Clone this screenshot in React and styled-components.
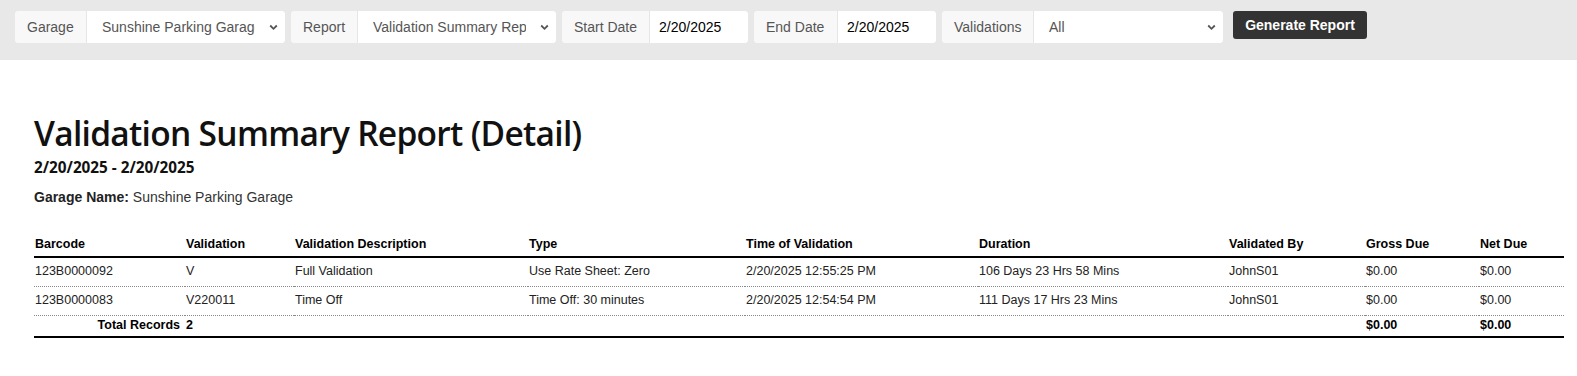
import React from "react";
import styled, { createGlobalStyle } from "styled-components";

const Global = createGlobalStyle`
  html, body { margin: 0; padding: 0; background: #fff; }
  body { font-family: "Liberation Sans", Arial, sans-serif; }
  * { box-sizing: border-box; }
`;

const Toolbar = styled.div`
  height: 60px;
  background: #e8e8e8;
  display: flex;
  align-items: flex-start;
  padding: 11px 0 0 15px;
  gap: 6px;
`;

const Group = styled.div`
  display: flex;
  flex-shrink: 0;
  height: 32px;
  border-radius: 4px;
  overflow: hidden;
  background: #fff;
`;

const Addon = styled.div`
  display: flex;
  align-items: center;
  flex-shrink: 0;
  white-space: nowrap;
  padding: 0 12px;
  background: #f8f8f8;
  border-right: 1px solid #e6e6e6;
  color: #555;
  font-size: 14px;
  width: ${(p) => p.$w}px;
`;

const SelectWrap = styled.div`
  position: relative;
  flex-shrink: 0;
  width: ${(p) => p.$w}px;
  height: 32px;
`;

const Select = styled.select`
  appearance: none;
  -webkit-appearance: none;
  border: none;
  outline: none;
  background: #fff;
  width: 100%;
  height: 100%;
  padding: 0 30px 0 15px;
  font-family: "Liberation Sans", Arial, sans-serif;
  font-size: 14px;
  color: #555;
`;

const Chevron = styled.svg`
  position: absolute;
  right: 7px;
  top: 13px;
  width: 9px;
  height: 7px;
  pointer-events: none;
`;

const DateInput = styled.input`
  border: none;
  outline: none;
  flex-shrink: 0;
  width: ${(p) => p.$w}px;
  height: 32px;
  padding: 0 9px;
  font-family: "Liberation Sans", Arial, sans-serif;
  font-size: 14px;
  color: #000;
  background: #fff;
`;

const Button = styled.button`
  margin-left: 4px;
  flex-shrink: 0;
  height: 28px;
  width: 134px;
  border: none;
  border-radius: 3px;
  background: #333;
  color: #fff;
  font-family: "Liberation Sans", Arial, sans-serif;
  font-weight: bold;
  font-size: 14px;
  padding: 0;
`;

const Content = styled.div`
  padding: 51px 13px 0 34px;
`;

const Title = styled.h1`
  margin: 0;
  font-family: "Open Sans", "Noto Sans", sans-serif;
  font-weight: 600;
  font-size: 33.5px;
  line-height: 44px;
  color: #111;
  letter-spacing: -0.7px;
`;

const Range = styled.div`
  font-family: "Open Sans", "Noto Sans", sans-serif;
  font-weight: 700;
  font-size: 15.3px;
  line-height: 20px;
  color: #111;
  margin-top: 2px;
`;

const Meta = styled.div`
  margin-top: 11px;
  font-size: 14px;
  line-height: 18px;
  color: #333;
  b { color: #222; }
`;

const Table = styled.table`
  margin-top: 23px;
  width: 1530px;
  border-collapse: collapse;
  table-layout: fixed;
  font-size: 12.5px;
  color: #222;
  border-bottom: 2px solid #000;
`;

const Th = styled.th`
  text-align: left;
  font-weight: bold;
  color: #000;
  padding: 4px 1px 5px;
  border-bottom: 2px solid #000;
  height: 28px;
  vertical-align: bottom;
`;

const Td = styled.td`
  padding: 0 1px 2px;
  height: ${(p) => p.$h || 29}px;
  text-align: ${(p) => p.$align || "left"};
  font-weight: ${(p) => (p.$bold ? "bold" : "normal")};
  color: ${(p) => (p.$bold ? "#000" : "#222")};
  padding-right: ${(p) => p.$pr || 1}px;
`;

const Tr = styled.tr`
  border-bottom: ${(p) => (p.$dotted ? "1px dotted #888" : "none")};
`;

const cols = [151, 109, 234, 217, 233, 250, 137, 114, 85];
const headers = [
  "Barcode",
  "Validation",
  "Validation Description",
  "Type",
  "Time of Validation",
  "Duration",
  "Validated By",
  "Gross Due",
  "Net Due",
];
const rows = [
  ["123B0000092", "V", "Full Validation", "Use Rate Sheet: Zero", "2/20/2025 12:55:25 PM", "106 Days 23 Hrs 58 Mins", "JohnS01", "$0.00", "$0.00"],
  ["123B0000083", "V220011", "Time Off", "Time Off: 30 minutes", "2/20/2025 12:54:54 PM", "111 Days 17 Hrs 23 Mins", "JohnS01", "$0.00", "$0.00"],
];

const ChevronIcon = () => (
  <Chevron viewBox="0 0 9 7">
    <path d="M1.2 1.5 L4.5 4.8 L7.8 1.5" fill="none" stroke="#555" strokeWidth="1.8" />
  </Chevron>
);

export default function App() {
  return (
    <>
      <Global />
      <Toolbar>
        <Group>
          <Addon $w={72}>Garage</Addon>
          <SelectWrap $w={198}>
            <Select defaultValue="g">
              <option value="g">Sunshine Parking Garage</option>
            </Select>
            <ChevronIcon />
          </SelectWrap>
        </Group>
        <Group>
          <Addon $w={67}>Report</Addon>
          <SelectWrap $w={198}>
            <Select defaultValue="r">
              <option value="r">Validation Summary Report</option>
            </Select>
            <ChevronIcon />
          </SelectWrap>
        </Group>
        <Group>
          <Addon $w={88}>Start Date</Addon>
          <DateInput $w={98} defaultValue="2/20/2025" />
        </Group>
        <Group>
          <Addon $w={84}>End Date</Addon>
          <DateInput $w={98} defaultValue="2/20/2025" />
        </Group>
        <Group>
          <Addon $w={92}>Validations</Addon>
          <SelectWrap $w={189}>
            <Select defaultValue="a">
              <option value="a">All</option>
            </Select>
            <ChevronIcon />
          </SelectWrap>
        </Group>
        <Button>Generate Report</Button>
      </Toolbar>
      <Content>
        <Title>Validation Summary Report (Detail)</Title>
        <Range>2/20/2025 - 2/20/2025</Range>
        <Meta>
          <b>Garage Name:</b> Sunshine Parking Garage
        </Meta>
        <Table>
          <colgroup>
            {cols.map((w, i) => (
              <col key={i} style={{ width: w }} />
            ))}
          </colgroup>
          <thead>
            <tr>
              {headers.map((h) => (
                <Th key={h}>{h}</Th>
              ))}
            </tr>
          </thead>
          <tbody>
            {rows.map((r) => (
              <Tr key={r[0]} $dotted>
                {r.map((c, i) => (
                  <Td key={i}>{c}</Td>
                ))}
              </Tr>
            ))}
            <Tr>
              <Td $h={22} $bold $align="right" $pr={5}>Total Records</Td>
              <Td $h={22} $bold>2</Td>
              <Td $h={22} />
              <Td $h={22} />
              <Td $h={22} />
              <Td $h={22} />
              <Td $h={22} />
              <Td $h={22} $bold>$0.00</Td>
              <Td $h={22} $bold>$0.00</Td>
            </Tr>
          </tbody>
        </Table>
      </Content>
    </>
  );
}
